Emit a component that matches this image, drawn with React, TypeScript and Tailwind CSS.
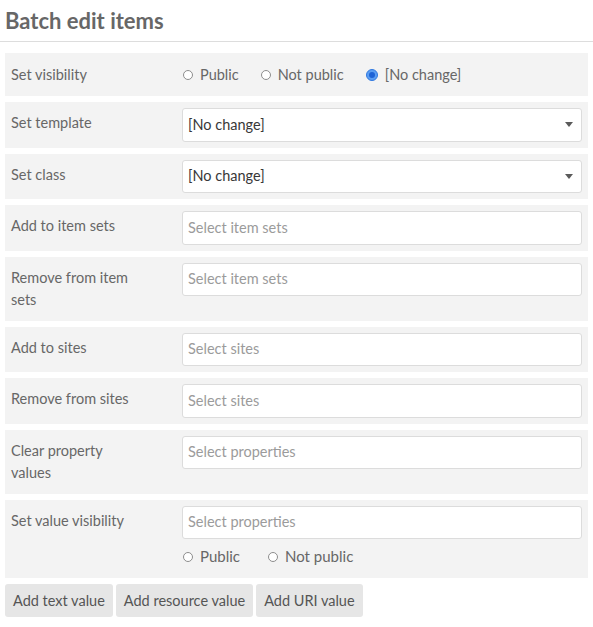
import React from 'react';

const Radio = ({ checked = false }: { checked?: boolean }) =>
  checked ? (
    <span className="inline-flex w-[12px] h-[12px] rounded-full bg-[#5b9ef2] border border-[#2f78e0] items-center justify-center shrink-0">
      <span className="w-[6px] h-[6px] rounded-full bg-[#1d63d6]"></span>
    </span>
  ) : (
    <span className="inline-block w-[10px] h-[10px] rounded-full bg-white border border-[#8d8d8d] shrink-0"></span>
  );

const RadioOption = ({ label, checked = false }: { label: string; checked?: boolean }) => (
  <label className="flex items-center gap-[7px]">
    <Radio checked={checked} />
    <span>{label}</span>
  </label>
);

const Row = ({ label, children, className = '' }: { label: string; children: React.ReactNode; className?: string }) => (
  <div className={`flex bg-[#f3f3f3] px-[6px] py-[6px] ${className}`}>
    <div className="w-[171px] shrink-0 pr-[44px] py-[4px] leading-[22px]">{label}</div>
    <div className="flex-1">{children}</div>
  </div>
);

const Select = ({ value }: { value: string }) => (
  <div className="h-[33.5px] bg-white border border-[#dcdcdc] rounded-[3px] flex items-center justify-between pl-[5px] pr-[8px] text-[#383838]">
    <span>{value}</span>
    <svg width="8" height="5" viewBox="0 0 8 5"><path d="M0 0h8L4 5z" fill="#5a5a5a" /></svg>
  </div>
);

const Input = ({ placeholder }: { placeholder: string }) => (
  <div className="h-[33.5px] bg-white border border-[#dcdcdc] rounded-[3px] flex items-center pl-[5px] text-[#9b9b9b]">
    {placeholder}
  </div>
);

export default function App() {
  return (
    <div className="w-[593px] h-[627px] bg-white text-[#676767] text-[14.5px] overflow-hidden" style={{ fontFamily: 'Lato, "Open Sans", sans-serif' }}>
      <div className="h-[42px] border-b border-[#dddddd] px-[5px] pt-[6px]">
        <h1 className="text-[22px] font-bold leading-[30px] text-[#676767]">Batch edit items</h1>
      </div>

      <div className="px-[5px] mt-[11px] flex flex-col gap-[6px]">
        <div className="flex bg-[#f3f3f3] px-[6px] py-[6.5px] leading-[22px]">
          <div className="w-[171px] shrink-0 py-[4px]">Set visibility</div>
          <div className="flex items-center gap-[22px] pl-[1px]">
            <RadioOption label="Public" />
            <RadioOption label="Not public" />
            <RadioOption label="[No change]" checked />
          </div>
        </div>

        <Row label="Set template"><Select value="[No change]" /></Row>
        <Row label="Set class"><Select value="[No change]" /></Row>
        <Row label="Add to item sets"><Input placeholder="Select item sets" /></Row>
        <Row label="Remove from item sets"><Input placeholder="Select item sets" /></Row>
        <Row label="Add to sites"><Input placeholder="Select sites" /></Row>
        <Row label="Remove from sites"><Input placeholder="Select sites" /></Row>
        <Row label="Clear property values"><Input placeholder="Select properties" /></Row>
        <Row label="Set value visibility" className="pb-[10px]">
          <Input placeholder="Select properties" />
          <div className="flex items-center gap-[28px] mt-[6px] h-[23px] pl-[1px] text-[15px]">
            <RadioOption label="Public" />
            <RadioOption label="Not public" />
          </div>
        </Row>

        <div className="flex gap-[3px]">
          {['Add text value', 'Add resource value', 'Add URI value'].map((b) => (
            <button key={b} className="h-[33px] px-[8px] bg-[#e6e6e6] rounded-[3px] text-[#555]">
              {b}
            </button>
          ))}
        </div>
      </div>
    </div>
  );
}
